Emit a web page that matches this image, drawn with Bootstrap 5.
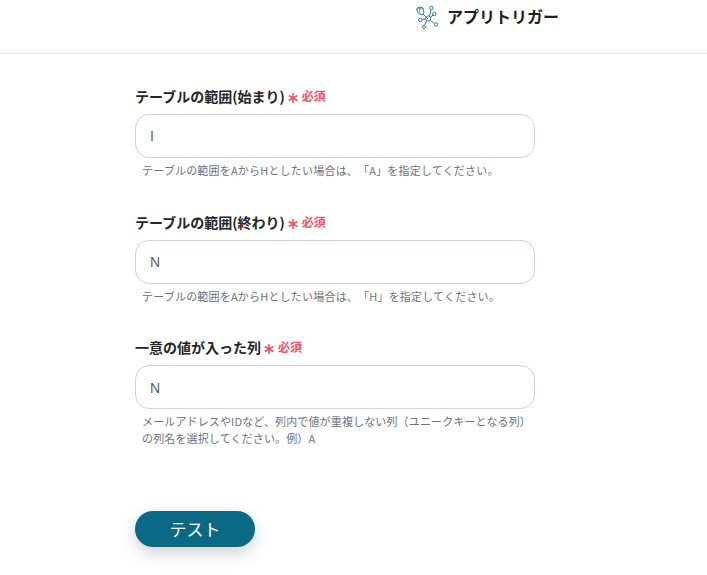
<!DOCTYPE html>
<html lang="ja"><head><meta charset="utf-8">
<link href="https://cdn.jsdelivr.net/npm/bootstrap@5.3.0/dist/css/bootstrap.min.css" rel="stylesheet">
<style>
html,body{height:575px;overflow:hidden;background:#fff}
body{font-family:"Noto Sans CJK JP","Liberation Sans",sans-serif;color:#212529;text-spacing-trim:space-all}
.topbar{height:54px;border-bottom:1px solid #e6e6e6;padding-left:415px;padding-top:4px;gap:9px}
.topbar svg{width:23px;height:25px;flex:none}
.brand{font-size:16px;font-weight:700;color:#1f1f1f;line-height:24px}
.formwrap{padding-left:135px;width:535px;box-sizing:content-box;padding-top:30px}
.field-lbl{font-size:14px;font-weight:700;line-height:24px;height:24px;margin-bottom:6px;color:#262626;align-items:center}
.req{color:#f7505f;font-size:12px;font-weight:700;gap:4px;margin-left:3px;align-items:center;line-height:26px}
.req svg{width:10px;height:10px;margin-top:3px;flex:none}
.formwrap .form-control{width:400px;height:44px;border-radius:14px;border-color:#ccd2d8;padding:0 14px;font-size:14px;color:#5a6068;font-family:"Liberation Sans",sans-serif}
.hint{font-size:11px;line-height:17px;color:#6b7280;padding-left:7px;width:400px;margin-top:4px;letter-spacing:.2px}
.fieldbox{height:126px}
.fieldbox.lastf{height:auto;margin-top:-1px}
.fieldbox.lastf .form-control{padding-top:1px}
.fieldbox.lastf .hint{letter-spacing:.14px}
.testbtn{width:120px;height:36px;border-radius:18px;background:#0a6a85;border:0;color:#fff;font-size:17px;line-height:36px;padding:0;margin-top:64px;box-shadow:0 6px 16px rgba(60,80,100,.25)}
.testbtn:hover{background:#0a6a85;color:#fff}
</style></head><body>
<div class="topbar d-flex align-items-start">
<svg viewBox="0 0 23 25" fill="none" stroke="#2b7f96" stroke-width="1"><path d="M13 15 8 10M14.500 12.500 16 6M15.500 13.500 18 11M15.500 16.500 19 19M11.500 17 9.500 21.500M10.500 15 7 15.500"/><path d="M1.500 5 4 3 8 4 9 9 7 11 3 9Z"/><path d="M4 3 5 9M1.500 5 8 4" stroke-width=".7"/><path d="M13 11.500 16 13.500 15 17 11.500 17 10.500 14Z"/><circle cx="16.500" cy="4" r="1.700" fill="#fff"/><circle cx="19.300" cy="10" r="1.700" fill="#fff"/><circle cx="21" cy="20.500" r="1.700" fill="#fff"/><circle cx="9" cy="23" r="1.500" fill="#fff"/><circle cx="5.300" cy="16" r="1.700" fill="#fff"/></svg>
<span class="brand">アプリトリガー</span>
</div>
<div class="formwrap">
<div class="fieldbox">
<div class="field-lbl d-flex">テーブルの範囲(始まり)<span class="req d-inline-flex"><svg viewBox="0 0 10 10" stroke="#f7505f" stroke-width="1.6"><path d="M5 0v10M.7 2.500l8.600 5M.7 7.500l8.600-5"/></svg>必須</span></div>
<input class="form-control" value="I">
<div class="hint">テーブルの範囲をAからHとしたい場合は、「A」を指定してください。</div>
</div>
<div class="fieldbox">
<div class="field-lbl d-flex">テーブルの範囲(終わり)<span class="req d-inline-flex"><svg viewBox="0 0 10 10" stroke="#f7505f" stroke-width="1.6"><path d="M5 0v10M.7 2.500l8.600 5M.7 7.500l8.600-5"/></svg>必須</span></div>
<input class="form-control" value="N">
<div class="hint">テーブルの範囲をAからHとしたい場合は、「H」を指定してください。</div>
</div>
<div class="fieldbox lastf">
<div class="field-lbl d-flex">一意の値が入った列<span class="req d-inline-flex"><svg viewBox="0 0 10 10" stroke="#f7505f" stroke-width="1.6"><path d="M5 0v10M.7 2.500l8.600 5M.7 7.500l8.600-5"/></svg>必須</span></div>
<input class="form-control" value="N">
<div class="hint">メールアドレスやIDなど、列内で値が重複しない列（ユニークキーとなる列）の列名を選択してください。例）A</div>
</div>
<button class="btn testbtn" type="button">テスト</button>
</div>
</body></html>
